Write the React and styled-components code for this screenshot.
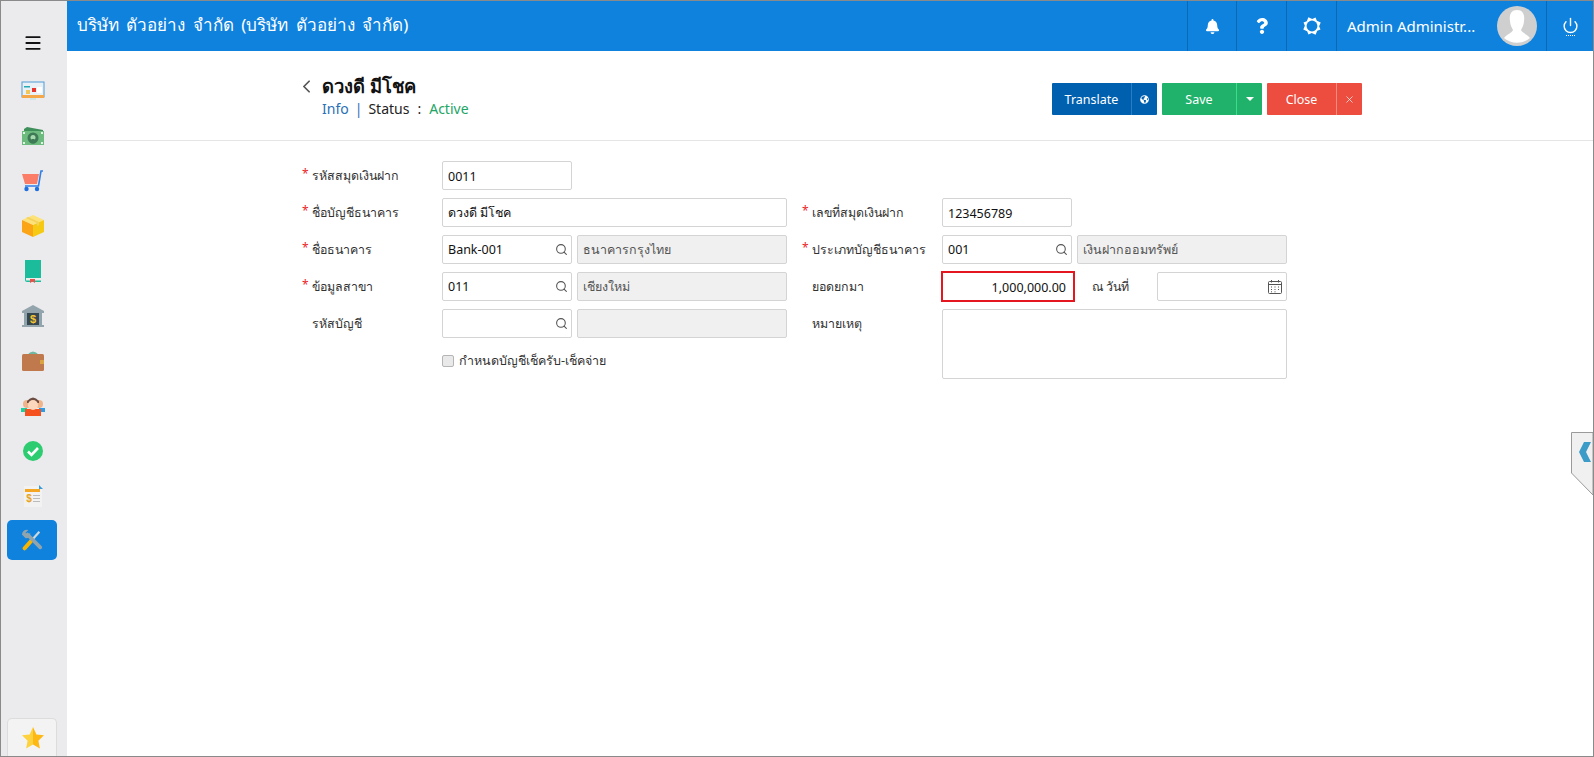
import React from "react";
import styled, { createGlobalStyle } from "styled-components";
import { FaBell, FaQuestion, FaGlobeAmericas } from "react-icons/fa";
import { Search, Power, ChevronLeft, X, Menu } from "lucide-react";

const FONT = `Tahoma, "Noto Sans", "DejaVu Sans", sans-serif`;

const GlobalStyle = createGlobalStyle`
  html, body {
    margin: 0;
    padding: 0;
    height: 100%;
    background: #fff;
    overflow: hidden;
  }
  * { box-sizing: border-box; }
`;

const Frame = styled.div`
  position: relative;
  display: flex;
  width: 1594px;
  height: 757px;
  border: 1px solid #8a8a8a;
  font-family: ${FONT};
  font-size: 13px;
  color: #333;
  overflow: hidden;
`;

const Sidebar = styled.nav`
  flex: none;
  width: 66px;
  background: #ebebed;
  display: flex;
  flex-direction: column;
  align-items: center;
  padding: 29px 4px 0 0;
`;

const Burger = styled.div`
  height: 26px;
  padding-left: 2px;
  display: flex;
  align-items: center;
  justify-content: center;
  color: #111;
  margin-bottom: 12px;
`;

const NavItem = styled.div`
  width: 50px;
  height: ${(p) => (p.$active ? "40px" : "45px")};
  margin-top: ${(p) => (p.$active ? "2px" : "0")};
  padding-left: ${(p) => (p.$active ? "0" : "2px")};
  display: flex;
  align-items: center;
  justify-content: center;
  border-radius: 5px;
  background: ${(p) => (p.$active ? "#0f82de" : "transparent")};
`;

const FavButton = styled.div`
  margin-top: auto;
  width: 50px;
  height: 38px;
  padding-left: 2px;
  display: flex;
  align-items: center;
  justify-content: center;
  background: #f3f3f3;
  border: 1px solid #dcdcdc;
  border-bottom: 0;
  border-radius: 5px 5px 0 0;
`;

const Main = styled.div`
  flex: 1;
  display: flex;
  flex-direction: column;
  min-width: 0;
`;

const Header = styled.header`
  flex: none;
  height: 50px;
  background: #0f82de;
  color: #fff;
  display: flex;
  align-items: stretch;
`;

const Company = styled.div`
  flex: 1;
  padding-left: 10px;
  font-size: 17px;
  word-spacing: 3px;
  line-height: 48px;
  white-space: nowrap;
`;

const HeaderCell = styled.div`
  width: ${(p) => p.$w}px;
  display: flex;
  align-items: center;
  justify-content: center;
  border-left: 1px solid #0b68b4;
`;

const UserCell = styled.div`
  width: 210px;
  display: flex;
  align-items: center;
  justify-content: space-between;
  padding: 0 9px 0 10px;
  border-left: 1px solid #0b68b4;
  font-size: 15px;
`;

const PowerCell = styled(HeaderCell)`
  flex-direction: column;
  gap: 1px;
`;

const PowerDots = styled.span`
  width: 9px;
  border-top: 1px dotted #fff;
`;

const TitleBar = styled.div`
  flex: none;
  height: 90px;
  border-bottom: 1px solid #e5e5e5;
  padding: 22px 231px 0 235px;
  display: flex;
  justify-content: space-between;
`;

const TitleBlock = styled.div`
  display: flex;
  align-items: flex-start;
`;

const Back = styled.span`
  width: 26px;
  height: 26px;
  margin-left: -6px;
  display: flex;
  align-items: center;
  color: #555;
`;

const Title = styled.h1`
  margin: 0;
  font-size: 18.4px;
  font-weight: 700;
  line-height: 26px;
  color: #111;
`;

const Meta = styled.div`
  font-size: 14px;
  line-height: 18px;
  margin-top: 1px;
  display: flex;
  gap: 6px;
`;

const MetaText = styled.span`
  color: ${(p) => p.$color || "#222"};
`;

const Colon = styled(MetaText)`
  margin: 0 2px;
`;

const Actions = styled.div`
  display: flex;
  gap: 5px;
  margin-top: 10px;
`;

const SplitButton = styled.div`
  height: 32px;
  display: flex;
  color: #fff;
  background: ${(p) => p.$bg};
  border-radius: 1px;
  font-size: 12.5px;
`;

const ButtonLabel = styled.span`
  width: ${(p) => p.$w}px;
  display: flex;
  align-items: center;
  justify-content: center;
`;

const ButtonSide = styled.span`
  width: 26px;
  display: flex;
  align-items: center;
  justify-content: center;
  border-left: 1px solid ${(p) => p.$line};
`;

const Caret = styled.span`
  width: 0;
  height: 0;
  border-left: 4px solid transparent;
  border-right: 4px solid transparent;
  border-top: 4px solid #fff;
`;

const Form = styled.form`
  display: flex;
  gap: 15px;
  padding: 20px 0 0 235px;
`;

const Column = styled.div`
  width: 485px;
  display: flex;
  flex-direction: column;
  gap: 8px;
`;

const Row = styled.div`
  display: flex;
  align-items: flex-start;
`;

const EmptyRow = styled.div`
  height: 29px;
`;

const Label = styled.label`
  flex: none;
  width: ${(p) => p.$w || 140}px;
  height: 29px;
  padding-left: ${(p) => p.$pad ?? 10}px;
  line-height: 29px;
  font-size: 12.4px;
  color: #333;
  position: relative;
  white-space: nowrap;
`;

const Star = styled.span`
  position: absolute;
  left: 0;
  top: -2px;
  color: #e8262a;
  font-size: 12px;
`;

const Fields = styled.div`
  display: flex;
  gap: 5px;
`;

const Box = styled.div`
  flex: none;
  width: ${(p) => p.$w}px;
  height: ${(p) => p.$h || 29}px;
  display: flex;
  align-items: center;
  justify-content: ${(p) => (p.$right ? "flex-end" : "space-between")};
  padding: 1px 3px 0 5px;
  border: ${(p) => (p.$alert ? "2px solid #e4161f" : "1px solid #d4d4d4")};
  border-radius: 2px;
  background: ${(p) => (p.$off ? "#f0f0f0" : "#fff")};
  color: ${(p) => (p.$off ? "#555" : "#111")};
  font-size: 12.5px;
  ${(p) => p.$alert && "margin: -1px; width: 134px; height: 31px; border-radius: 0; padding-right: 7px;"}
`;

const LookupBox = styled(Box)`
  padding-top: 0;
`;

const SearchSlot = styled.span`
  margin-left: auto;
  display: flex;
`;

const Check = styled.label`
  display: flex;
  align-items: center;
  gap: 5px;
  margin: 0 0 0 140px;
  padding-top: 7px;
  font-size: 12.5px;
  line-height: 16px;
  color: #333;
`;

const CheckBox = styled.span`
  width: 12px;
  height: 12px;
  background: #e9e9e9;
  border: 1px solid #b5b5b5;
  border-radius: 2px;
`;

const SideTab = styled.div`
  position: absolute;
  right: 0;
  top: 431px;
  width: 22px;
  height: 63px;
`;

const SideTabShape = styled.svg`
  position: absolute;
  inset: 0;
`;

const Ico = ({ children, w = 24, h = 24 }) => (
  <svg width={w} height={h} viewBox="0 0 24 24">{children}</svg>
);

const Monitor = () => (
  <Ico>
    <rect x="1" y="3" width="22" height="15" fill="#e9f1f7" stroke="#4f9bd6" strokeWidth="1" />
    <rect x="1" y="16" width="22" height="3" fill="#f5a84a" />
    <rect x="3" y="7" width="6" height="1.5" fill="#27a9b5" />
    <rect x="5" y="11" width="4" height="4" fill="#f2c65a" />
    <rect x="11" y="9" width="4" height="4" fill="#e8352e" />
    <rect x="16" y="8" width="5" height="6" fill="#fff" />
    <rect x="9" y="19" width="6" height="2" fill="#cfe4e6" />
  </Ico>
);

const Money = () => (
  <Ico>
    <path d="M3 5 L6 3 L22 6 V9 H3z" fill="#3f8f5b" />
    <rect x="1" y="7" width="22" height="14" fill="#6dbb7f" />
    <circle cx="12" cy="14" r="5.5" fill="#3d7a55" />
    <circle cx="12" cy="13.5" r="2.5" fill="#a6d8ae" />
    <rect x="10.5" y="15" width="3" height="4.5" fill="#3d7a55" />
    <rect x="2" y="8" width="2" height="2" fill="#e4f3e6" />
    <rect x="20" y="8" width="2" height="2" fill="#e4f3e6" />
    <rect x="2" y="18" width="2" height="2" fill="#e4f3e6" />
    <rect x="20" y="18" width="2" height="2" fill="#e4f3e6" />
  </Ico>
);

const Cart = () => (
  <Ico>
    <path d="M1 5 H18 L16 15 H4z" fill="#fb7d68" />
    <path d="M22 2 H20 L17.5 17 H4" fill="none" stroke="#2f7fe6" strokeWidth="1.6" />
    <circle cx="5.5" cy="20" r="2.2" fill="#1f6fe0" />
    <circle cx="16" cy="20" r="2.2" fill="#1f6fe0" />
  </Ico>
);

const Package = () => (
  <Ico>
    <path d="M12 1 L23 6 L12 11 L1 6z" fill="#fde27a" />
    <path d="M1 6 L12 11 V23 L1 18z" fill="#fba416" />
    <path d="M23 6 L12 11 V23 L23 18z" fill="#f6c915" />
    <path d="M7 3 L18 8 V11 L16 12 V9 L5 4z" fill="#f3d25d" />
  </Ico>
);

const Book = () => (
  <Ico>
    <path d="M4 1 H20 V23 H6 Q4 23 4 21z" fill="#1abc9c" />
    <rect x="5" y="19" width="15" height="2.5" fill="#e6efe9" />
    <path d="M9 20 H14 V24 L11.5 22.5 L9 24z" fill="#e8524a" />
  </Ico>
);

const Bank = () => (
  <Ico>
    <path d="M12 1 L23 7 V9 H1 V7z" fill="#93a4ad" />
    <rect x="4" y="9" width="16" height="12" fill="#37474f" />
    <rect x="1" y="21" width="22" height="2" fill="#93a4ad" />
    <rect x="3" y="9" width="3" height="12" fill="#90a4ae" />
    <rect x="18" y="9" width="3" height="12" fill="#90a4ae" />
    <text x="12" y="19" textAnchor="middle" fontSize="11" fontWeight="700" fill="#f4c430" fontFamily="Liberation Sans, sans-serif">$</text>
  </Ico>
);

const Wallet = () => (
  <Ico>
    <path d="M6 6 Q12 -1 18 6z" fill="#6fb7a0" />
    <rect x="1" y="5" width="22" height="17" rx="1.5" fill="#c0794c" />
    <rect x="19" y="11" width="4" height="4" fill="#d9a441" />
  </Ico>
);

const People = () => (
  <Ico>
    <circle cx="6" cy="10" r="4" fill="#f0b48a" />
    <circle cx="18" cy="10" r="4" fill="#f0b48a" />
    <path d="M6 7 Q12 0 18 7 V9 H6z" fill="#6d4c41" />
    <rect x="0" y="14" width="6" height="4" fill="#1dd1a1" />
    <rect x="18" y="14" width="6" height="4" fill="#2e9be6" />
    <rect x="4" y="15" width="16" height="7" fill="#f4511e" />
    <circle cx="12" cy="11" r="5" fill="#fcd7bc" />
  </Ico>
);

const Approved = () => (
  <Ico>
    <circle cx="12" cy="12" r="10" fill="#2ecc71" />
    <path d="M7 12.5 L10.5 16 L17 9" fill="none" stroke="#fff" strokeWidth="2.6" />
  </Ico>
);

const Report = () => (
  <Ico>
    <rect x="3" y="2" width="18" height="21" fill="#f2f2f2" />
    <rect x="4" y="5" width="15" height="3" fill="#f5a623" />
    <path d="M18 1 L22 5 H18z" fill="#3a9ad9" />
    <text x="8" y="18" textAnchor="middle" fontSize="10" fontWeight="700" fill="#e8a21c" fontFamily="Liberation Sans, sans-serif">$</text>
    <rect x="12" y="11" width="7" height="1" fill="#bbb" />
    <rect x="12" y="14" width="7" height="1" fill="#bbb" />
    <rect x="12" y="17" width="7" height="1" fill="#bbb" />
  </Ico>
);

const Tools = () => (
  <Ico w={22} h={22}>
    <path d="M4 21 L12 12" stroke="#f7b500" strokeWidth="4.5" strokeLinecap="round" />
    <path d="M12 12 L20 3" stroke="#cfd8dc" strokeWidth="2.4" />
    <path d="M7 6 L21 20" stroke="#90a4ae" strokeWidth="4" strokeLinecap="round" />
    <path d="M1 6 Q2 0 8 1 L5 4 L7 7 L10 4 Q11 10 5 10z" fill="#90a4ae" />
  </Ico>
);

const FavStar = () => (
  <Ico>
    <path d="M12 1 L15.4 8.4 L23 9.3 L17.4 14.7 L18.9 22.6 L12 18.6z" fill="#fdb813" />
    <path d="M12 1 L8.6 8.4 L1 9.3 L6.6 14.7 L5.1 22.6 L12 18.6z" fill="#fed23f" />
  </Ico>
);

const Gear = () => (
  <svg width="20" height="20" viewBox="0 0 24 24">
    <path d="M12 1 L15 4 H20 V9 L23 12 L20 15 V20 H15 L12 23 L9 20 H4 V15 L1 12 L4 9 V4 H9z" fill="#fff" transform="rotate(22.5 12 12)" />
    <circle cx="12" cy="12" r="6.5" fill="#0f82de" />
  </svg>
);

const Avatar = () => (
  <svg width="40" height="40" viewBox="0 0 40 40">
    <circle cx="20" cy="20" r="20" fill="#cfcfcf" />
    <path d="M20 4 C26 4 28 9 27 15 C27 19 25 22 24 24 C25 27 30 28 33 32 A20 20 0 0 1 7 32 C10 28 15 27 16 24 C15 22 13 19 13 15 C12 9 14 4 20 4z" fill="#fff" />
  </svg>
);

const Calendar = () => (
  <svg width="16" height="16" viewBox="0 0 16 16" fill="none" stroke="#555" strokeWidth="1">
    <rect x="1.5" y="2.5" width="13" height="12" rx="1" />
    <path d="M1.5 5.5 H14.5" />
    <path d="M4.5 1 V3.5 M11.5 1 V3.5" />
    <path d="M4 8 H5 M7.5 8 H8.5 M11 8 H12 M4 10.5 H5 M7.5 10.5 H8.5 M11 10.5 H12 M4 12.8 H5 M7.5 12.8 H8.5" />
  </svg>
);

const navIcons = [Monitor, Money, Cart, Package, Book, Bank, Wallet, People, Approved, Report];

const Field = ({ label, required, children }) => (
  <Row>
    <Label>
      {required && <Star>*</Star>}
      {label}
    </Label>
    <Fields>{children}</Fields>
  </Row>
);

const Lookup = ({ value, name }) => (
  <>
    <LookupBox $w={130}>
      {value}
      <SearchSlot>
        <Search size={13} color="#555" strokeWidth={2} />
      </SearchSlot>
    </LookupBox>
    <Box $w={210} $off>{name}</Box>
  </>
);

export default function App() {
  return (
    <>
      <GlobalStyle />
      <Frame>
        <Sidebar>
          <Burger>
            <Menu size={20} strokeWidth={2.2} />
          </Burger>
          {navIcons.map((Icon, i) => (
            <NavItem key={i}>
              <Icon />
            </NavItem>
          ))}
          <NavItem $active>
            <Tools />
          </NavItem>
          <FavButton>
            <FavStar />
          </FavButton>
        </Sidebar>
        <Main>
          <Header>
            <Company>บริษัท ตัวอย่าง จำกัด (บริษัท ตัวอย่าง จำกัด)</Company>
            <HeaderCell $w={49}><FaBell size={15} /></HeaderCell>
            <HeaderCell $w={50}><FaQuestion size={16} /></HeaderCell>
            <HeaderCell $w={50}><Gear /></HeaderCell>
            <UserCell>
              Admin Administr...
              <Avatar />
            </UserCell>
            <PowerCell $w={47}>
              <Power size={17} strokeWidth={2} />
              <PowerDots />
            </PowerCell>
          </Header>
          <TitleBar>
            <TitleBlock>
              <Back><ChevronLeft size={21} strokeWidth={2} /></Back>
              <div>
                <Title>ดวงดี มีโชค</Title>
                <Meta>
                  <MetaText $color="#2a6fb5">Info</MetaText>
                  <MetaText $color="#2a6fb5">|</MetaText>
                  <MetaText>Status</MetaText>
                  <Colon>:</Colon>
                  <MetaText $color="#22a565">Active</MetaText>
                </Meta>
              </div>
            </TitleBlock>
            <Actions>
              <SplitButton $bg="#0060b0">
                <ButtonLabel $w={79}>Translate</ButtonLabel>
                <ButtonSide $line="#2a7cc4"><FaGlobeAmericas size={9} /></ButtonSide>
              </SplitButton>
              <SplitButton $bg="#20b26b">
                <ButtonLabel $w={74}>Save</ButtonLabel>
                <ButtonSide $line="#3ddc8a"><Caret /></ButtonSide>
              </SplitButton>
              <SplitButton $bg="#ec4d3e">
                <ButtonLabel $w={69}>Close</ButtonLabel>
                <ButtonSide $line="#f58a7e"><X size={11} strokeWidth={1.5} /></ButtonSide>
              </SplitButton>
            </Actions>
          </TitleBar>
          <Form>
            <Column>
              <Field label="รหัสสมุดเงินฝาก" required>
                <Box $w={130}>0011</Box>
              </Field>
              <Field label="ชื่อบัญชีธนาคาร" required>
                <Box $w={345}>ดวงดี มีโชค</Box>
              </Field>
              <Field label="ชื่อธนาคาร" required>
                <Lookup value="Bank-001" name="ธนาคารกรุงไทย" />
              </Field>
              <Field label="ข้อมูลสาขา" required>
                <Lookup value="011" name="เชียงใหม่" />
              </Field>
              <Field label="รหัสบัญชี">
                <Lookup value="" name="" />
              </Field>
              <Check>
                <CheckBox />
                กำหนดบัญชีเช็ครับ-เช็คจ่าย
              </Check>
            </Column>
            <Column>
              <EmptyRow />
              <Field label="เลขที่สมุดเงินฝาก" required>
                <Box $w={130}>123456789</Box>
              </Field>
              <Field label="ประเภทบัญชีธนาคาร" required>
                <Lookup value="001" name="เงินฝากออมทรัพย์" />
              </Field>
              <Field label="ยอดยกมา">
                <Box $w={130} $alert $right>1,000,000.00</Box>
                <Label $w={73} $pad={13}>ณ วันที่</Label>
                <Box $w={130} $right><Calendar /></Box>
              </Field>
              <Field label="หมายเหตุ">
                <Box $w={345} $h={70} />
              </Field>
            </Column>
          </Form>
        </Main>
        <SideTab>
          <SideTabShape width="22" height="63" viewBox="0 0 22 63">
            <path d="M22 0.5 H0.5 V41 L22 63z" fill="#f0f0f0" stroke="#9a9a9a" />
            <path d="M13 10 H20 L15 20 L20 30 H13 L8 20z" fill="#3d9bc8" />
          </SideTabShape>
        </SideTab>
      </Frame>
    </>
  );
}
